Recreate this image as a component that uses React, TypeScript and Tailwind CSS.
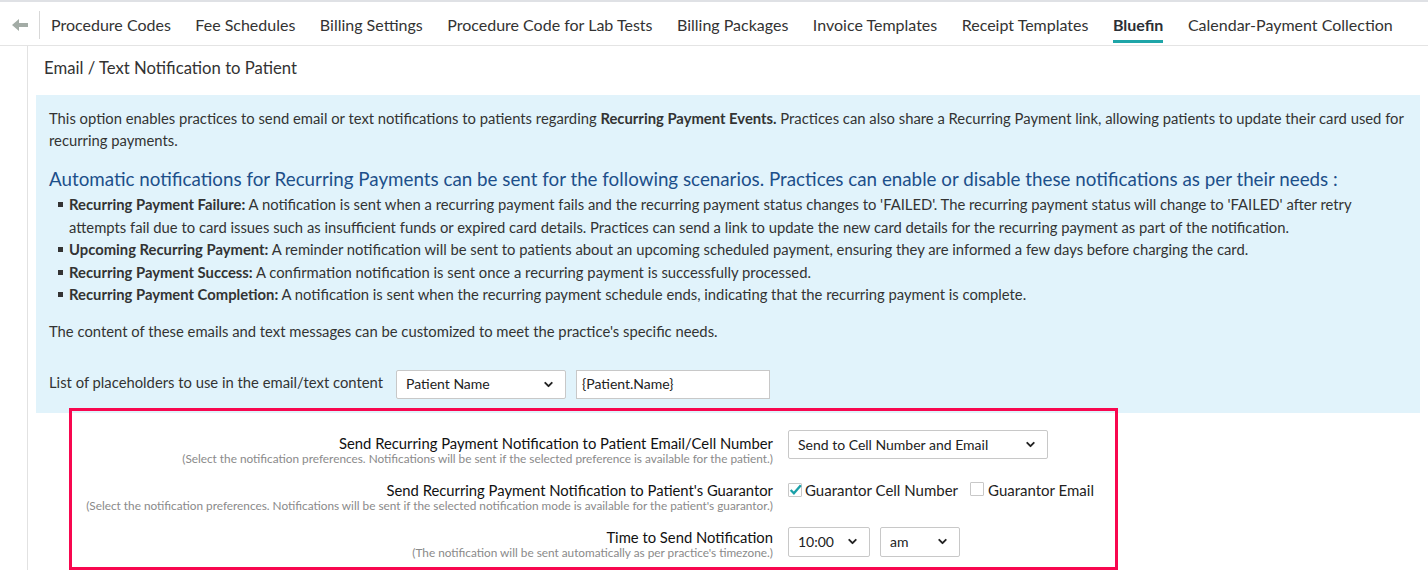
import { ChevronDown } from "lucide-react";

const tabs = [
  "Procedure Codes",
  "Fee Schedules",
  "Billing Settings",
  "Procedure Code for Lab Tests",
  "Billing Packages",
  "Invoice Templates",
  "Receipt Templates",
  "Bluefin",
  "Calendar-Payment Collection",
];

const scenarios = [
  {
    title: "Recurring Payment Failure:",
    text: "A notification is sent when a recurring payment fails and the recurring payment status changes to 'FAILED'. The recurring payment status will change to 'FAILED' after retry attempts fail due to card issues such as insufficient funds or expired card details. Practices can send a link to update the new card details for the recurring payment as part of the notification.",
  },
  {
    title: "Upcoming Recurring Payment:",
    text: "A reminder notification will be sent to patients about an upcoming scheduled payment, ensuring they are informed a few days before charging the card.",
  },
  {
    title: "Recurring Payment Success:",
    text: "A confirmation notification is sent once a recurring payment is successfully processed.",
  },
  {
    title: "Recurring Payment Completion:",
    text: "A notification is sent when the recurring payment schedule ends, indicating that the recurring payment is complete.",
  },
];

function Select({ value, className }: { value: string; className: string }) {
  return (
    <div
      className={`flex items-center justify-between border border-[#c8c8c8] rounded-[2px] bg-white pl-[9px] pr-[10px] text-[14px] text-[#222] ${className}`}
    >
      <span>{value}</span>
      <ChevronDown className="w-[13px] h-[13px] text-[#222]" strokeWidth={3.5} />
    </div>
  );
}

function Checkbox({ checked }: { checked?: boolean }) {
  return (
    <span className="relative inline-flex w-[14px] h-[14px] border border-[#c8c8c8] bg-white rounded-[1px]">
      {checked && (
        <svg viewBox="0 0 14 14" className="absolute -left-[1px] -top-[2px] w-[15px] h-[15px]">
          <path d="M2.5 7.5 L5.5 10.5 L12 3" fill="none" stroke="#1aa0a8" strokeWidth="2.2" />
        </svg>
      )}
    </span>
  );
}

function FormRow({
  title,
  hint,
  children,
  controlClass,
}: {
  title: string;
  hint: string;
  children: React.ReactNode;
  controlClass: string;
}) {
  return (
    <div className="flex items-start">
      <div className="w-[701px] shrink-0 text-right">
        <div className="text-[14.8px] leading-[17px] text-[#111]">{title}</div>
        <div className="text-[11.8px] leading-[13px] text-[#8a8a8a]">{hint}</div>
      </div>
      <div className={`ml-[15px] flex items-center ${controlClass}`}>{children}</div>
    </div>
  );
}

export default function App() {
  return (
    <div className="w-[1428px] h-[570px] overflow-hidden bg-white font-['Lato','Noto_Sans',sans-serif] text-[#333]">
      {/* tab bar */}
      <div className="h-[46px] border-t-2 border-[#dfe1e5] border-b border-b-[#e4e4e4] flex items-center">
        <div className="w-[40px] h-[28px] mt-[2px] flex items-center justify-center border-r border-[#d8d8d8]">
          <svg viewBox="0 0 16 12" className="w-[16px] h-[12px]">
            <path d="M0 6 L7 0 L7 4 L16 4 L16 8 L7 8 L7 12 Z" fill="#a3aca6" />
          </svg>
        </div>
        <div className="flex items-center gap-[24.5px] pl-[11px] h-full">
          {tabs.map((t) => (
            <div
              key={t}
              className={`relative h-full flex items-center pt-[3px] text-[16px] ${
                t === "Bluefin" ? "font-bold text-[#2b2f36]" : "text-[#333]"
              }`}
            >
              {t}
              {t === "Bluefin" && (
                <span className="absolute left-0 right-0 bottom-[2px] h-[3px] bg-[#1ea5a8]" />
              )}
            </div>
          ))}
        </div>
      </div>

      <div className="flex h-full">
        <div className="w-[28px] shrink-0 border-r border-[#e2e2e2]" />
        <div className="flex-1 pl-[8px] pr-[8px]">
          <div className="pl-[8px] pt-[12px] text-[16.7px] text-[#333] leading-[20px]">
            Email / Text Notification to Patient
          </div>

          <div className="mt-[17px] bg-[#e1f3fb] pl-[13px] pr-[12px] pt-[12px] pb-[14px] text-[14.8px] leading-[22px] text-[#333]">
            <p>
              This option enables practices to send email or text notifications to patients regarding{" "}
              <b className="font-bold">Recurring Payment Events.</b> Practices can also share a Recurring
              Payment link, allowing patients to update their card used for recurring payments.
            </p>
            <h3 className="mt-[16px] text-[18.8px] leading-[24px] text-[#1c4f8a]">
              Automatic notifications for Recurring Payments can be sent for the following scenarios. Practices
              can enable or disable these notifications as per their needs :
            </h3>
            <ul className="mt-[2px] leading-[22.5px]">
              {scenarios.map((s) => (
                <li key={s.title} className="flex">
                  <span className="w-[20px] shrink-0 flex justify-center pt-[9px] pl-[3px]">
                    <span className="w-[5px] h-[5px] bg-[#333]" />
                  </span>
                  <span>
                    <b className="font-bold">{s.title}</b> {s.text}
                  </span>
                </li>
              ))}
            </ul>
            <p className="mt-[14px]">
              The content of these emails and text messages can be customized to meet the practice's specific
              needs.
            </p>
            <div className="mt-[28px] flex items-start">
              <span className="w-[347px] pt-[1px]">List of placeholders to use in the email/text content</span>
              <Select value="Patient Name" className="w-[170px] h-[29px]" />
              <div className="ml-[10px] w-[194px] h-[29px] border border-[#c8c8c8] bg-white pl-[5px] flex items-center text-[14px] text-[#222]">
                {"{Patient.Name}"}
              </div>
            </div>
          </div>

          <div className="ml-[33px] -mt-[5px] w-[1049px] h-[162px] border-[3px] border-[#f8074f] pt-[24px] flex flex-col gap-[17px]">
            <FormRow
              title="Send Recurring Payment Notification to Patient Email/Cell Number"
              hint="(Select the notification preferences. Notifications will be sent if the selected preference is available for the patient.)"
              controlClass="-mt-[5px]"
            >
              <Select value="Send to Cell Number and Email" className="w-[260px] h-[29px]" />
            </FormRow>
            <FormRow
              title="Send Recurring Payment Notification to Patient's Guarantor"
              hint="(Select the notification preferences. Notifications will be sent if the selected notification mode is available for the patient's guarantor.)"
              controlClass="-mt-[3px] text-[15px] text-[#222]"
            >
              <Checkbox checked />
              <span className="ml-[3px]">Guarantor Cell Number</span>
              <span className="ml-[12px]">
                <Checkbox />
              </span>
              <span className="ml-[4px]">Guarantor Email</span>
            </FormRow>
            <FormRow
              title="Time to Send Notification"
              hint="(The notification will be sent automatically as per practice's timezone.)"
              controlClass="-mt-[2px]"
            >
              <Select value="10:00" className="w-[82px] h-[30px]" />
              <Select value="am" className="ml-[10px] w-[80px] h-[30px]" />
            </FormRow>
          </div>
        </div>
      </div>
    </div>
  );
}
